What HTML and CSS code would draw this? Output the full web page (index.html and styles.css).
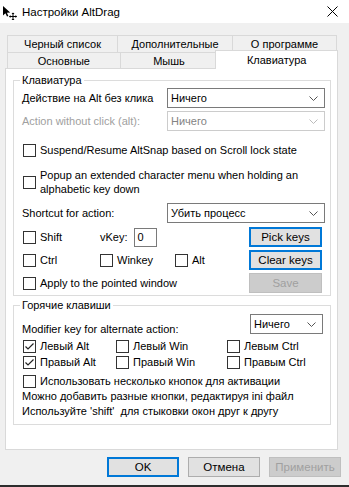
FILE: index.html
```html
<!DOCTYPE html>
<html lang="ru">
  <head>
    <meta charset="UTF-8" />
    <title>Настройки AltDrag</title>
    <link rel="stylesheet" href="styles.css">
  </head>
  <body>
    <div class="window">
      <!-- заголовок окна -->
      <div class="titlebar">
        <svg class="app-icon" width="16" height="16" viewBox="0 0 16 16">
          <path d="M1 2 L1 11.5 L3.4 9.3 L5 12.6 L6.4 12 L4.9 8.7 L8.2 8.6 Z" fill="#000" />
          <path d="M11 9 V16 M7.5 12.5 H14.5" stroke="#000" stroke-width="1" fill="none" />
          <path d="M11 8.5 L9.5 10 H12.5 Z M11 16.5 L9.5 15 H12.5 Z M7 12.5 L8.5 11 V14 Z M15 12.5 L13.5 11 V14 Z" fill="#000" />
        </svg>
        <span class="title">Настройки AltDrag</span>
        <svg class="close" width="11" height="11" viewBox="0 0 11 11">
          <path d="M0.5 0.5 L10.5 10.5 M10.5 0.5 L0.5 10.5" stroke="#000" stroke-width="1" />
        </svg>
      </div>

      <!-- вкладки -->
      <div class="tabs">
        <div class="tab-row">
          <div class="tab tab-blacklist">Черный список</div>
          <div class="tab tab-advanced">Дополнительные</div>
          <div class="tab tab-about">О программе</div>
        </div>
        <div class="tab-row">
          <div class="tab tab-general">Основные</div>
          <div class="tab tab-mouse">Мышь</div>
          <div class="tab tab-keyboard is-active">Клавиатура</div>
        </div>
      </div>

      <div class="panel">
        <fieldset class="group">
          <legend>Клавиатура</legend>

          <div class="field-row first">
            <span class="field-label">Действие на Alt без клика</span>
            <div class="combo">
              <span>Ничего</span>
              <svg class="arrow" width="9" height="5" viewBox="0 0 9 5"><polyline points="0.5,0.5 4.5,4.5 8.5,0.5" fill="none" stroke="#555" /></svg>
            </div>
          </div>

          <div class="field-row second">
            <span class="field-label is-disabled">Action without click (alt):</span>
            <div class="combo is-disabled">
              <span>Ничего</span>
              <svg class="arrow" width="9" height="5" viewBox="0 0 9 5"><polyline points="0.5,0.5 4.5,4.5 8.5,0.5" fill="none" stroke="#bbb" /></svg>
            </div>
          </div>

          <label class="check suspend"><span class="box"></span>Suspend/Resume AltSnap based on Scroll lock state</label>

          <label class="check popup"><span class="box"></span><span>Popup an extended character menu when holding an<br>alphabetic key down</span></label>

          <div class="field-row shortcut">
            <span class="field-label">Shortcut for action:</span>
            <div class="combo">
              <span>Убить процесс</span>
              <svg class="arrow" width="9" height="5" viewBox="0 0 9 5"><polyline points="0.5,0.5 4.5,4.5 8.5,0.5" fill="none" stroke="#555" /></svg>
            </div>
          </div>

          <div class="keys">
            <label class="check"><span class="box"></span>Shift</label>
            <div class="vkey">vKey:<span class="vkey-input">0</span></div>
            <span></span>
            <button class="btn is-focused">Pick keys</button>

            <label class="check"><span class="box"></span>Ctrl</label>
            <label class="check"><span class="box"></span>Winkey</label>
            <label class="check"><span class="box"></span>Alt</label>
            <button class="btn is-focused">Clear keys</button>

            <label class="check span-3"><span class="box"></span>Apply to the pointed window</label>
            <button class="btn is-disabled">Save</button>
          </div>
        </fieldset>

        <fieldset class="group hotkeys">
          <legend>Горячие клавиши</legend>

          <div class="field-row modifier">
            <span class="field-label low">Modifier key for alternate action:</span>
            <div class="combo small">
              <span>Ничего</span>
              <svg class="arrow" width="9" height="5" viewBox="0 0 9 5"><polyline points="0.5,0.5 4.5,4.5 8.5,0.5" fill="none" stroke="#555" /></svg>
            </div>
          </div>

          <div class="hot-grid">
            <label class="check"><span class="box"><svg width="11" height="11" viewBox="0 0 11 11"><polyline points="1.5,5.5 4,8 9.5,2.5" fill="none" stroke="#222" stroke-width="1.2" /></svg></span>Левый Alt</label>
            <label class="check"><span class="box"></span>Левый Win</label>
            <label class="check"><span class="box"></span>Левым Ctrl</label>
            <label class="check"><span class="box"><svg width="11" height="11" viewBox="0 0 11 11"><polyline points="1.5,5.5 4,8 9.5,2.5" fill="none" stroke="#222" stroke-width="1.2" /></svg></span>Правый Alt</label>
            <label class="check"><span class="box"></span>Правый Win</label>
            <label class="check"><span class="box"></span>Правым Ctrl</label>
          </div>

          <label class="check multi"><span class="box"></span>Использовать несколько кнопок для активации</label>

          <p class="note">Можно добавить разные кнопки, редактируя ini файл<br>Используйте 'shift'&nbsp; для стыковки окон друг к другу</p>
        </fieldset>
      </div>

      <div class="actions">
        <button class="btn is-focused">OK</button>
        <button class="btn">Отмена</button>
        <button class="btn is-disabled">Применить</button>
      </div>
    </div>
  </body>
</html>
```

FILE: styles.css
```css
body {
  margin: 0;
  font-family: "Liberation Sans", Arial, sans-serif;
  font-size: 11px;
  color: #000;
  background-color: #f0f0f0;
}

.window {
  width: 349px;
  height: 487px;
  box-sizing: border-box;
  border-bottom: 2px solid #2d2d2d;
  background-color: #f0f0f0;
}

/* заголовок */
.titlebar {
  height: 23px;
  display: flex;
  align-items: center;
  padding-left: 2px;
  font-size: 11.5px;
  background-color: #fff;
}

.title {
  margin-left: 4px;
}

.close {
  margin-left: auto;
  margin-right: 11px;
}

/* вкладки */
.tabs {
  margin: 12px 0 0 7px;
  width: 330px;
}

.tab-row {
  display: flex;
  height: 17px;
}

.tab-row + .tab-row {
  height: 16px;
}

.tab {
  box-sizing: border-box;
  border: 1px solid #d9d9d9;
  border-right: none;
  border-bottom: none;
  text-align: center;
  line-height: 16px;
  color: #000;
}

.tab:last-child {
  border-right: 1px solid #d9d9d9;
}

.tab-blacklist { width: 110px; }
.tab-advanced { width: 115px; }
.tab-about { width: 105px; }
.tab-general { width: 113px; }
.tab-mouse { width: 98px; }
.tab-keyboard { width: 119px; }

.tab.is-active {
  position: relative;
  z-index: 1;
  width: 123px;
  height: 19px;
  margin: -2px -1px 0 -2px;
  line-height: 18px;
  background-color: #fff;
}

/* панель вкладки */
.panel {
  margin-left: 5px;
  width: 333px;
  height: 382px;
  box-sizing: border-box;
  border: 1px solid #d9d9d9;
  background-color: #fff;
  padding: 4px 6px 0 7px;
}

.group {
  margin: 0;
  min-width: 0;
  padding: 0 5px 2px 8px;
  border: 1px solid #dcdcdc;
}

.group legend {
  padding: 0 2px;
  margin-left: -2px;
  line-height: 14px;
}

.hotkeys {
  margin-top: 2px;
  padding-bottom: 5px;
}

.field-row {
  display: flex;
  align-items: center;
  height: 20px;
}

.field-row.first { margin-top: 1px; }
.field-row.second { margin-top: 3px; }
.field-row.shortcut { margin-top: 7px; }
.field-row.modifier { margin-top: 2px; }

.field-label.is-disabled {
  color: #a0a0a0;
}

.field-label.low {
  align-self: flex-end;
  line-height: 14px;
  margin-bottom: -2px;
}

.combo {
  box-sizing: border-box;
  width: 158px;
  height: 20px;
  margin-left: auto;
  display: flex;
  align-items: center;
  padding: 0 6px 0 3px;
  border: 1px solid #7a7a7a;
  background-color: #fff;
}

.combo.is-disabled {
  border-color: #cccccc;
  color: #838383;
}

.combo.small {
  width: 73px;
  margin-right: 2px;
}

.combo .arrow {
  margin-left: auto;
}

/* флажки */
.check {
  display: flex;
  align-items: center;
  line-height: 15px;
}

.box {
  flex: none;
  width: 13px;
  height: 13px;
  box-sizing: border-box;
  margin: 0 4px 0 1px;
  border: 1px solid #333;
  background-color: #fff;
}

.box svg {
  display: block;
}

.check.suspend { margin-top: 12px; }
.check.popup { margin-top: 10px; line-height: 14px; }

.keys {
  display: grid;
  grid-template-columns: 77px 75px 75px 73px;
  grid-auto-rows: 20px;
  row-gap: 3px;
  align-items: center;
  margin-top: 4px;
}

.span-3 {
  grid-column: span 3;
}

.vkey {
  display: flex;
  align-items: center;
  padding-left: 1px;
}

.vkey-input {
  box-sizing: border-box;
  width: 23px;
  height: 19px;
  margin-left: 6px;
  padding-left: 3px;
  line-height: 17px;
  border: 1px solid #7a7a7a;
}

.hot-grid {
  display: grid;
  grid-template-columns: 93px 111px 1fr;
  grid-auto-rows: 16px;
  align-items: center;
  margin-top: 4px;
}

.check.multi {
  margin-top: 4px;
}

.note {
  margin: 0;
  line-height: 15px;
}

/* кнопки */
.btn {
  box-sizing: border-box;
  height: 20px;
  padding: 0;
  font-family: inherit;
  font-size: 11.5px;
  color: #000;
  background-color: #e1e1e1;
  border: 1px solid #adadad;
}

.btn.is-focused {
  border: 2px solid #0078d7;
}

.btn.is-disabled {
  color: #a0a0a0;
  background-color: #cccccc;
  border-color: #bfbfbf;
}

.actions {
  display: flex;
  justify-content: flex-end;
  gap: 9px;
  padding: 7px 8px 0 0;
}

.actions .btn {
  width: 72px;
}
```
